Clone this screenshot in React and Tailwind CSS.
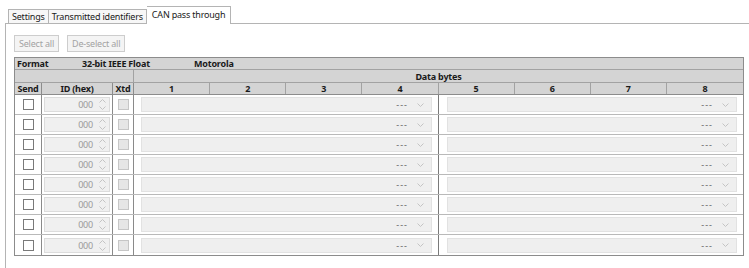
const rows = Array.from({ length: 8 }, (_, i) => i);
const byteCols = [1, 2, 3, 4, 5, 6, 7, 8];

const Chevron = ({ up = false }) => (
  <svg width="7" height="4" viewBox="0 0 7 4" className="block">
    <path
      d={up ? "M0.5 3.5 L3.5 0.5 L6.5 3.5" : "M0.5 0.5 L3.5 3.5 L6.5 0.5"}
      fill="none"
      stroke="#c4c4c4"
      strokeWidth="1"
    />
  </svg>
);

const Combo = () => (
  <div className="flex-1 h-[15px] bg-[#efefef] border border-[#e2e2e2] flex items-center justify-end pr-[7px] gap-[9px]">
    <span className="text-[#666] tracking-[1px] leading-none text-[9px]">---</span>
    <Chevron />
  </div>
);

const DataRow = () => (
  <div className="flex h-[20px] border-b border-[#b9b9b9] last:border-b-0">
    <div className="w-[27px] border-r border-[#8a8a8a] flex items-center justify-center">
      <div className="w-[11px] h-[11px] border border-[#7a7a7a] bg-white" />
    </div>
    <div className="w-[71px] border-r border-[#8a8a8a] flex items-center px-[2px]">
      <div className="w-full h-[15px] bg-[#f0f0f0] border border-[#dcdcdc] flex items-center justify-end pr-[3px] gap-[6px]">
        <span className="text-[#9a9a9a] leading-none">000</span>
        <div className="flex flex-col gap-[3px]">
          <Chevron up />
          <Chevron />
        </div>
      </div>
    </div>
    <div className="w-[21px] border-r border-[#8a8a8a] flex items-center justify-center">
      <div className="w-[11px] h-[11px] border border-[#c6c6c6] bg-[#e6e6e6]" />
    </div>
    <div className="w-[305px] border-r border-[#7a7a7a] flex items-center pl-[7px] pr-[6px]">
      <Combo />
    </div>
    <div className="flex-1 flex items-center pl-[8px] pr-[6px]">
      <Combo />
    </div>
  </div>
);

export default function App() {
  return (
    <div
      className="w-[749px] h-[268px] bg-white overflow-hidden text-[9px] tracking-[-0.2px] text-[#1a1a1a]"
      style={{ fontFamily: '"Noto Sans", "Open Sans", sans-serif' }}
    >
      {/* tab strip */}
      <div className="h-[23px] flex items-end pl-[8px] relative z-10">
        <div className="h-[14px] px-[3px] border border-b-0 border-[#b4b4b4] bg-[#f7f7f7] leading-[13px]">Settings</div>
        <div className="h-[14px] px-[3px] border border-b-0 border-l-0 border-[#b4b4b4] bg-[#f7f7f7] leading-[13px]">Transmitted identifiers</div>
        <div className="h-[18px] px-[5px] border border-b-0 border-l-0 border-[#b4b4b4] bg-white leading-[15px] -mb-px">CAN pass through</div>
      </div>

      {/* tab panel */}
      <div className="ml-[5px] h-[245px] border-l border-t border-[#b4b4b4] pt-[11px]">
        <div className="flex gap-[8px] pl-[8px]">
          <div className="h-[17px] px-[4px] border border-[#cdcdcd] bg-[#f4f4f4] text-[#a3a3a3] leading-[15px]">Select all</div>
          <div className="h-[17px] px-[4px] border border-[#cdcdcd] bg-[#f4f4f4] text-[#a3a3a3] leading-[15px]">De-select all</div>
        </div>

        <div className="mt-[5px] ml-[8px] w-[730px] border border-[#8c8c8c] font-bold">
          <div className="h-[12px] bg-[#d4d4d4] border-b border-[#a2a2a2] flex items-center leading-none">
            <span className="w-[67px] pl-[2px]">Format</span>
            <span className="w-[112px]">32-bit IEEE Float</span>
            <span>Motorola</span>
          </div>
          <div className="h-[13px] bg-[#d4d4d4] border-b border-[#a2a2a2] flex leading-none">
            <div className="w-[119px] border-r border-[#a2a2a2]" />
            <div className="flex-1 flex items-center justify-center">Data bytes</div>
          </div>
          <div className="h-[12px] bg-[#d4d4d4] border-b border-[#8c8c8c] flex leading-none">
            <div className="w-[27px] border-r border-[#8c8c8c] flex items-center justify-center">Send</div>
            <div className="w-[71px] border-r border-[#8c8c8c] flex items-center justify-center">ID (hex)</div>
            <div className="w-[21px] border-r border-[#8c8c8c] flex items-center justify-center">Xtd</div>
            <div className="flex-1 grid grid-cols-8">
              {byteCols.map((n) => (
                <div key={n} className="flex items-center justify-center border-r border-[#a2a2a2] last:border-r-0">
                  {n}
                </div>
              ))}
            </div>
          </div>
          <div className="font-normal">
            {rows.map((r) => (
              <DataRow key={r} />
            ))}
          </div>
        </div>
      </div>
    </div>
  );
}
